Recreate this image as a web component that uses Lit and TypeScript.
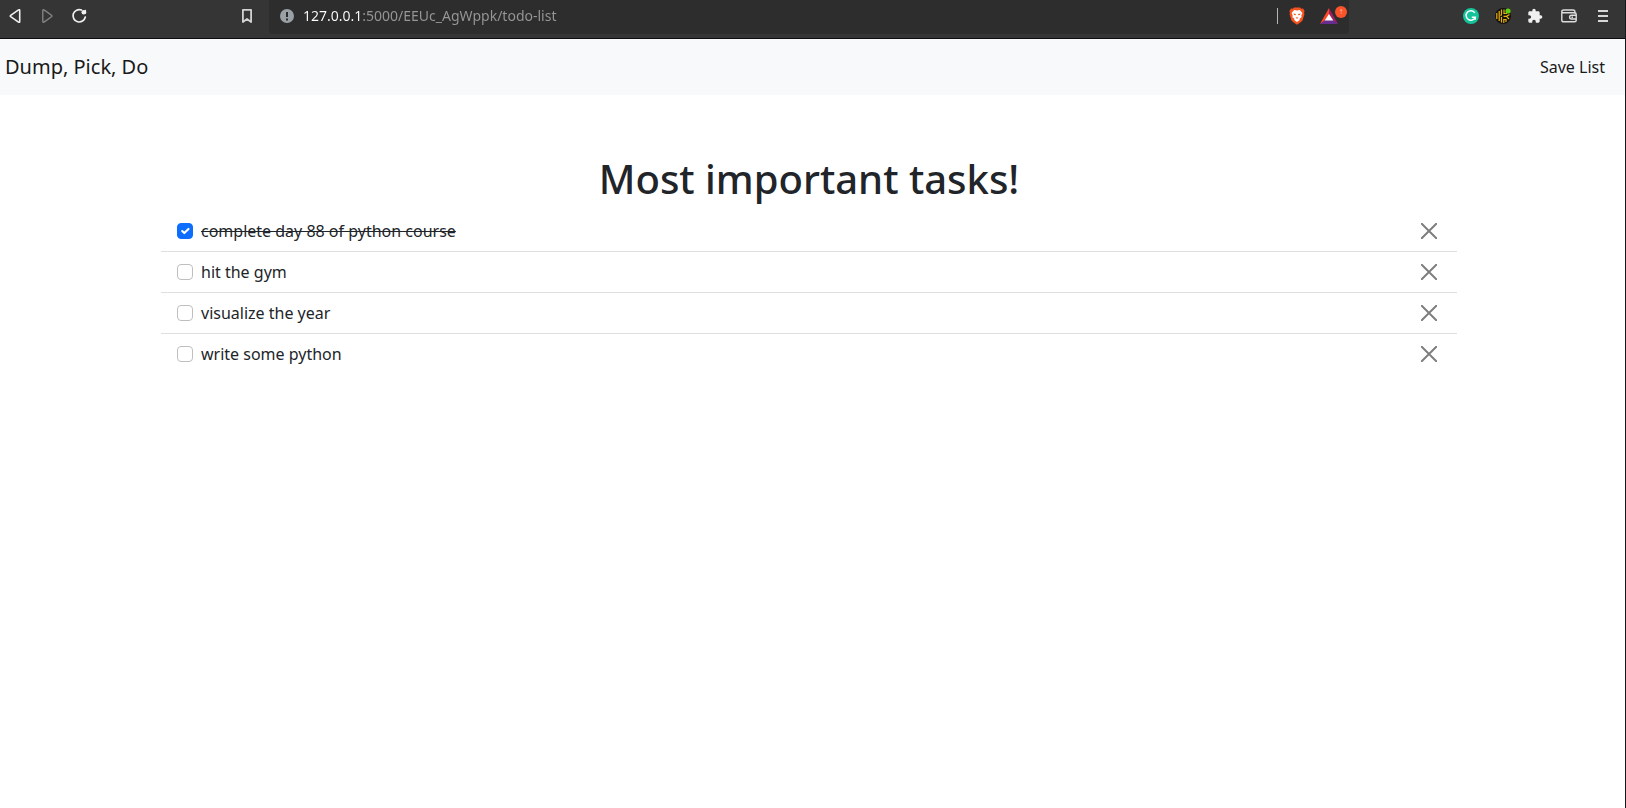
import { LitElement, html, css, svg } from "lit";
import { customElement, state } from "lit/decorators.js";

interface Task {
  id: number;
  name: string;
  done: boolean;
}

@customElement("browser-bar")
export class BrowserBar extends LitElement {
  static styles = css`
    :host {
      display: block;
      background: #353535;
      border-bottom: 1px solid #0c0c10;
      font-family: "Noto Sans", sans-serif;
    }
    .bar {
      display: flex;
      height: 38px;
    }
    .group {
      display: flex;
      height: 32px;
    }
    .nav {
      width: 264px;
    }
    .bookmark {
      margin-left: auto;
    }
    .tools {
      width: 276px;
      justify-content: flex-end;
      padding-right: 6px;
      box-sizing: border-box;
    }
    .spaced {
      margin-left: 2px;
    }
    button {
      display: grid;
      place-items: center;
      width: 32px;
      height: 32px;
      padding: 0;
      border: 0;
      background: none;
      color: #f0f0f0;
    }
    button:disabled {
      color: #828282;
    }
    svg {
      display: block;
      overflow: visible;
    }
    .address {
      display: flex;
      flex: 1;
      height: 32px;
      margin-left: 5px;
      padding: 0 4px 2px 11px;
      background: #2d2d2d;
      border-radius: 0 0 4px 4px;
      align-items: center;
      margin-bottom: auto;
    }
    .url {
      flex: 1;
      min-width: 0;
      height: 32px;
      box-sizing: border-box;
      margin-left: 9px;
      padding: 0 0 2px;
      border: 0;
      outline: 0;
      font-family: inherit;
      font-size: 14px;
      color: transparent;
      caret-color: #fff;
      background: linear-gradient(90deg, #fff 60px, #979797 60px);
      -webkit-background-clip: text;
      background-clip: text;
    }
    .divider {
      width: 1px;
      height: 16px;
      margin-right: 3px;
      background: #b4b4b4;
    }
    .reward {
      position: relative;
    }
    .badge {
      position: absolute;
      top: 6px;
      right: -2px;
      width: 12px;
      height: 12px;
      border-radius: 50%;
      background: #fb542b;
      color: #ffd8cc;
      font-size: 8px;
      line-height: 12px;
      text-align: center;
    }
  `;

  render() {
    return html`
      <div class="bar">
        <div class="group nav">
          <button aria-label="Back">
            <svg width="16" height="16" viewBox="0 0 16 16" fill="none" stroke="currentColor" stroke-width="1.6" stroke-linejoin="round">
              <path d="M10.500 1.900Q11.700 1.300 11.700 2.600V13.400Q11.700 14.700 10.500 14.100L2.700 8.700Q1.800 8 2.700 7.300Z" />
            </svg>
          </button>
          <button aria-label="Forward" disabled>
            <svg width="16" height="16" viewBox="0 0 16 16" fill="none" stroke="currentColor" stroke-width="1.4" stroke-linejoin="round">
              <path d="M4 1.9Q2.8 1.3 2.8 2.6V13.4Q2.8 14.7 4 14.1L11.500 8.700Q12.400 8 11.500 7.300Z" />
            </svg>
          </button>
          <button aria-label="Reload">
            <svg width="16" height="16" viewBox="0 0 16 16" fill="none" stroke="currentColor" stroke-width="1.7" stroke-linecap="round">
              <path d="M9.500 2A6.200 6.200 0 1 0 13.300 9" />
              <circle cx="11.800" cy="4.200" r="2.300" fill="currentColor" stroke="none" />
              <path d="M13.300 2.700V5" />
            </svg>
          </button>
          <button class="bookmark" aria-label="Bookmark">
            <svg width="16" height="16" viewBox="0 0 16 16" fill="none" stroke="#d2d2d2" stroke-width="1.8" stroke-linejoin="round">
              <path d="M2.900 1.900H11.100V14L7 11L2.900 14Z" />
            </svg>
          </button>
        </div>
        <div class="address">
          <svg width="14" height="14" viewBox="0 0 14 14" aria-hidden="true">
            <circle cx="7" cy="7" r="7" fill="#9aa0a6" />
            <path d="M6 3H8V8H6ZM6 9.5H8V11.5H6Z" fill="#2d2d2d" />
          </svg>
          <input class="url" aria-label="Address" spellcheck="false" .value=${"127.0.0.1:5000/EEUc_AgWppk/todo-list"} />
          <span class="divider"></span>
          <button aria-label="Brave Shields">
            <svg width="16" height="18" viewBox="0 0 16 18">
              <path d="M5 .4H11L12.3 1.8L14 1.6L15.6 4L15 6L15.5 7L13.6 13.3Q13 14.6 8 17.8Q3 14.6 2.4 13.3L.5 7L1 6L.4 4L2 1.6L3.7 1.8Z" fill="#f4521e" />
              <path d="M8 3.4L10.8 2.9L13.4 6L12.3 8.6L12.6 10.3L10.5 11.7L10.8 13L8 15L5.2 13L5.5 11.7L3.4 10.3L3.7 8.6L2.6 6L5.2 2.9Z" fill="#fff" />
              <path d="M4.2 6.4L7 7.1L6.6 8.3Q5 8.2 4.2 6.4ZM11.8 6.4L9 7.1L9.4 8.3Q11 8.2 11.8 6.4ZM6.5 10.8L8 11.7L9.5 10.8L8 10.3Z" fill="#f4521e" />
            </svg>
          </button>
          <button class="reward" aria-label="Brave Rewards">
            <svg width="18" height="16" viewBox="0 0 18 16">
              <path d="M9 0L0 16L9 10Z" fill="#ff4724" />
              <path d="M9 0L18 16L9 10Z" fill="#9e1f63" />
              <path d="M0 16H18L9 9Z" fill="#662d91" />
              <path d="M9 6L4.7 12.4H13.3Z" fill="#fff" />
            </svg>
            <span class="badge">↑</span>
          </button>
        </div>
        <div class="group tools">
          <button aria-label="Grammarly">
            <svg width="16" height="16" viewBox="0 0 16 16">
              <circle cx="8" cy="8" r="8" fill="#15c39a" />
              <path d="M11.8 4.9A4.7 4.7 0 1 0 12.2 9.2H8.8M12.2 8.7V11.8" fill="none" stroke="#fff" stroke-width="1.5" />
            </svg>
          </button>
          <button aria-label="Password manager">
            <svg width="16" height="16" viewBox="0 0 16 16">
              <circle cx="8" cy="8" r="8" fill="#151310" />
              <path d="M1.800 5V11M4.200 3V13M6.500 1.500V6L5.800 8M6.500 9V14.500M9 1.500V5.500H12M8.800 15V11.500H11V14M8.500 8.300H11.500L14.500 6.500M11.500 8.300L14 11" fill="none" stroke="#ebb10c" stroke-width="1.2" />
              <circle cx="13" cy="3" r="2.600" fill="#5fd00c" />
            </svg>
          </button>
          <button aria-label="Extensions">
            <svg width="16" height="16" viewBox="0 0 24 24" fill="currentColor">
              <path d="M20.5 11H19V7c0-1.1-.9-2-2-2h-4V3.500a2.500 2.500 0 0 0-5 0V5H4c-1.100 0-2 .9-2 2v3.800h1.500a2.700 2.700 0 0 1 0 5.400H2V20c0 1.100.9 2 2 2h3.800v-1.500a2.700 2.700 0 0 1 5.400 0V22H17c1.100 0 2-.9 2-2v-4h1.500a2.500 2.500 0 0 0 0-5z" />
            </svg>
          </button>
          <button class="spaced" aria-label="Wallet">
            <svg width="16" height="16" viewBox="0 0 16 16" fill="none" stroke="#dcdcdc" stroke-width="1.4">
              <path d="M14 5.700V4.400Q14 2 12 2H2.700Q.8 2 .8 3.500Q.8 4.800 2.500 4.800H13.500Q15.200 4.800 15.200 6.300V12.300Q15.200 13.800 13.700 13.800H2.500Q.8 13.800 .8 12.300V3.500" />
              <path d="M15.200 7.300H10.500Q8.600 7.300 8.600 9.100Q8.600 11 10.500 11H15.200" />
              <path d="M10.500 9.200H12" />
            </svg>
          </button>
          <button class="spaced" aria-label="Menu">
            <svg width="10" height="12" viewBox="0 0 10 12">
              <path d="M0 1H10M0 6H10M0 11H10" stroke="#d8d8d8" stroke-width="1.8" />
            </svg>
          </button>
        </div>
      </div>
    `;
  }
}

@customElement("task-list")
export class TaskList extends LitElement {
  static styles = css`
    :host {
      display: block;
    }
    .list {
      list-style: none;
      margin: 0;
      padding: 0;
    }
    .item {
      display: flex;
      align-items: center;
      justify-content: space-between;
      padding: 8px 16px;
    }
    .item + .item {
      border-top: 1px solid #dfdfdf;
    }
    .label {
      display: flex;
      align-items: center;
      gap: 8px;
    }
    .done {
      text-decoration: line-through;
    }
    .check {
      appearance: none;
      width: 16px;
      height: 16px;
      margin: 0;
      border: 1px solid #bfbfbf;
      border-radius: 4px;
      background: #fff center / contain no-repeat;
    }
    .check:checked {
      border-color: #0d6efd;
      background-color: #0d6efd;
      background-image: url("data:image/svg+xml,%3csvg xmlns='http://www.w3.org/2000/svg' viewBox='0 0 20 20'%3e%3cpath fill='none' stroke='%23fff' stroke-linecap='round' stroke-linejoin='round' stroke-width='3' d='m6 10 3 3 6-6'/%3e%3c/svg%3e");
    }
    .remove {
      display: block;
      width: 24px;
      height: 24px;
      padding: 4px;
      border: 0;
      background: none;
      color: #000;
      opacity: 0.5;
      cursor: pointer;
    }
    .cross {
      display: block;
    }
  `;

  @state() private tasks: Task[] = [
    { id: 1, name: "complete day 88 of python course", done: true },
    { id: 2, name: "hit the gym", done: false },
    { id: 3, name: "visualize the year", done: false },
    { id: 4, name: "write some python", done: false },
  ];

  private toggle(id: number) {
    this.tasks = this.tasks.map((t) => (t.id === id ? { ...t, done: !t.done } : t));
  }

  private remove(id: number) {
    this.tasks = this.tasks.filter((t) => t.id !== id);
  }

  render() {
    return html`
      <ul class="list">
        ${this.tasks.map(
          (t) => html`
            <li class="item">
              <label class="label">
                <input class="check" type="checkbox" .checked=${t.done} @change=${() => this.toggle(t.id)} />
                <span class=${t.done ? "done" : ""}>${t.name}</span>
              </label>
              <button class="remove" aria-label="Remove ${t.name}" @click=${() => this.remove(t.id)}>
                <svg class="cross" width="16" height="16" viewBox="0 0 16 16">
                  ${svg`<path d="M.7 .7L15.300 15.300M15.300 .7L.7 15.300" stroke="currentColor" stroke-width="2" stroke-linecap="round" />`}
                </svg>
              </button>
            </li>
          `
        )}
      </ul>
    `;
  }
}

@customElement("app-root")
export class AppRoot extends LitElement {
  static styles = css`
    :host {
      display: block;
      box-sizing: border-box;
      min-height: 100vh;
      border-right: 1px solid #16161a;
      background: #fff;
      color: #212529;
      font-family: "Noto Sans", sans-serif;
      font-size: 16px;
      line-height: 24px;
    }
    .navbar {
      display: flex;
      align-items: center;
      justify-content: space-between;
      height: 56px;
      padding: 0 20px 0 5px;
      background: #f8f9fb;
    }
    .navbar a {
      color: #191a1a;
      text-decoration: none;
    }
    .navbar .brand {
      font-size: 20px;
      line-height: 30px;
    }
    .page {
      padding: 60px 7px 0 0;
    }
    .container {
      max-width: 1296px;
      margin: 0 auto;
    }
    .title {
      margin: 0 0 8px;
      font-size: 40px;
      line-height: 48px;
      font-weight: 500;
      text-align: center;
    }
  `;

  render() {
    return html`
      <browser-bar></browser-bar>
      <nav class="navbar">
        <a class="brand" href="#">Dump, Pick, Do</a>
        <a href="#save">Save List</a>
      </nav>
      <main class="page">
        <div class="container">
          <h1 class="title">Most important tasks!</h1>
          <task-list></task-list>
        </div>
      </main>
    `;
  }
}
